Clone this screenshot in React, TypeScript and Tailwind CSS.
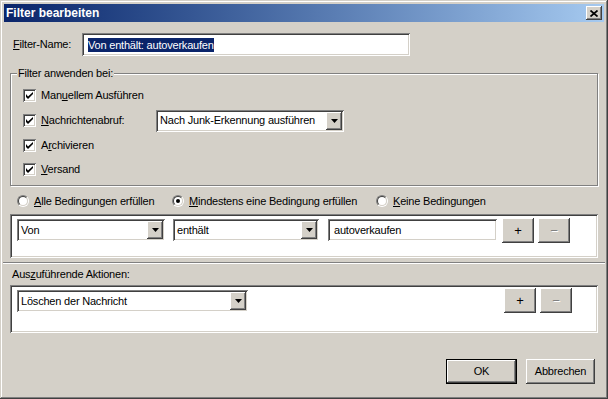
const raised =
  'shadow-[inset_-1px_-1px_#404040,inset_1px_1px_#ffffff,inset_-2px_-2px_#808080,inset_2px_2px_#d4d0c8]'
const sunken =
  'shadow-[inset_1px_1px_#808080,inset_-1px_-1px_#ffffff,inset_2px_2px_#404040,inset_-2px_-2px_#d4d0c8]'

function Arrow() {
  return (
    <span className={`w-[16px] self-stretch my-[2px] mr-[2px] bg-[#d4d0c8] flex items-center justify-center ${raised}`}>
      <svg width="7" height="4" viewBox="0 0 7 4">
        <path d="M0 0h7L3.5 4z" fill="#000" />
      </svg>
    </span>
  )
}

function Select({ value, className }: { value: string; className: string }) {
  return (
    <div className={`h-[22px] bg-white flex items-stretch ${sunken} ${className}`}>
      <span className="flex-1 flex items-center pl-[4px] whitespace-nowrap overflow-hidden">{value}</span>
      <Arrow />
    </div>
  )
}

function Check({ children, h }: { children: React.ReactNode; h: string }) {
  return (
    <div className={`flex items-center ${h}`}>
      <span className={`w-[13px] h-[13px] bg-white flex items-center justify-center ${sunken}`}>
        <svg width="7" height="7" viewBox="0 0 7 7">
          <path d="M0 2v3l2 2 5-5V-0L2 4.5z" fill="#000" />
        </svg>
      </span>
      <span className="ml-[5px]">{children}</span>
    </div>
  )
}

function Radio({ on, children, w }: { on?: boolean; children: React.ReactNode; w: string }) {
  return (
    <div className={`flex items-center ${w}`}>
      <span className="w-[12px] h-[12px] rounded-full border border-t-[#808080] border-l-[#808080] border-b-white border-r-white">
        <span className="w-full h-full rounded-full border border-t-[#404040] border-l-[#404040] border-b-[#d4d0c8] border-r-[#d4d0c8] bg-white flex items-center justify-center">
          {on && <span className="w-[4px] h-[4px] rounded-full bg-black" />}
        </span>
      </span>
      <span className="ml-[5px] whitespace-nowrap">{children}</span>
    </div>
  )
}

function PlusMinus() {
  return (
    <div className="flex gap-[4px]">
      <button className={`w-[32px] h-[25px] bg-[#d4d0c8] text-[13px] flex items-center justify-center ${raised}`}>+</button>
      <button className={`w-[32px] h-[25px] bg-[#d4d0c8] text-[13px] text-[#808080] [text-shadow:1px_1px_#ffffff] flex items-center justify-center ${raised}`}>−</button>
    </div>
  )
}

export default function App() {
  return (
    <div className="w-[608px] h-[399px] overflow-hidden bg-[#d4d0c8] p-[4px] font-['Liberation_Sans',Arial,sans-serif] text-[11px] tracking-[-0.2px] text-black shadow-[inset_-1px_-1px_#404040,inset_1px_1px_#d4d0c8,inset_-2px_-2px_#808080,inset_2px_2px_#ffffff]">
      {/* Title bar */}
      <div className="h-[18px] flex items-center justify-between pl-[2px] pr-[2px] bg-linear-to-r from-[#0a246a] to-[#a6caf0]">
        <span className="text-white font-bold text-[12px] tracking-normal">Filter bearbeiten</span>
        <button className={`w-[16px] h-[14px] bg-[#d4d0c8] flex items-center justify-center ${raised}`}>
          <svg width="8" height="7" viewBox="0 0 8 7">
            <path d="M0.5 0.5L7.5 6.5M7.5 0.5L0.5 6.5" stroke="#000" strokeWidth="1.7" />
          </svg>
        </button>
      </div>

      <div className="px-[6px]">
        {/* Filter name */}
        <div className="mt-[11px] h-[23px] flex items-center">
          <span className="w-[72px] pl-[3px]">
            <span className="underline">F</span>ilter-Name:
          </span>
          <div className={`w-[328px] h-[23px] bg-white flex items-center pl-[6px] ${sunken}`}>
            <span className="bg-[#0a246a] text-white leading-[14px]">Von enthält: autoverkaufen</span>
          </div>
        </div>

        {/* Group box */}
        <div className="relative mt-[17px] h-[113px] border border-[#808080] shadow-[inset_1px_1px_#ffffff,1px_1px_#ffffff] pl-[12px] pt-[9px]">
          <span className="absolute -top-[7px] left-[6px] px-[1px] bg-[#d4d0c8] leading-[13px]">Filter anwenden bei:</span>
          <Check h="h-[25px]">
            Man<span className="underline">u</span>ellem Ausführen
          </Check>
          <div className="flex items-center h-[25px]">
            <Check h="h-[25px] w-[133px]">
              <span className="underline">N</span>achrichtenabruf:
            </Check>
            <Select value="Nach Junk-Erkennung ausführen" className="w-[188px]" />
          </div>
          <Check h="h-[24px]">
            A<span className="underline">r</span>chivieren
          </Check>
          <Check h="h-[24px]">
            <span className="underline">V</span>ersand
          </Check>
        </div>

        {/* Radios */}
        <div className="mt-[5px] h-[20px] flex items-center pl-[7px]">
          <Radio w="w-[155px]">
            <span className="underline">A</span>lle Bedingungen erfüllen
          </Radio>
          <Radio on w="w-[204px]">
            <span className="underline">M</span>indestens eine Bedingung erfüllen
          </Radio>
          <Radio w="w-[150px]">
            <span className="underline">K</span>eine Bedingungen
          </Radio>
        </div>

        {/* Conditions */}
        <div className={`mt-[3px] h-[44px] bg-white flex items-start pl-[7px] pt-[4px] ${sunken}`}>
          <Select value="Von" className="w-[148px] mt-[1px]" />
          <Select value="enthält" className="w-[146px] ml-[8px] mt-[1px]" />
          <div className={`w-[169px] h-[22px] ml-[9px] mt-[1px] bg-white flex items-center pl-[6px] ${sunken}`}>
            autoverkaufen
          </div>
          <div className="ml-[5px]">
            <PlusMinus />
          </div>
        </div>

        {/* Separator */}
        <div className="-mx-[7px] mt-[4px] h-[2px] border-t border-t-[#808080] border-b border-b-white" />

        <div className="mt-[2px] h-[16px] flex items-center pl-[2px]">
          Aus<span className="underline">z</span>uführende Aktionen:
        </div>

        {/* Actions */}
        <div className={`mt-[3px] h-[48px] bg-white flex items-start pl-[7px] pt-[3px] pr-[26px] ${sunken}`}>
          <Select value="Löschen der Nachricht" className="w-[231px] mt-[2px]" />
          <div className="ml-auto">
            <PlusMinus />
          </div>
        </div>

        {/* Dialog buttons */}
        <div className="mt-[26px] flex justify-end gap-[9px] pr-[3px]">
          <button className={`w-[71px] h-[25px] bg-[#d4d0c8] border border-black shadow-[inset_-1px_-1px_#404040,inset_1px_1px_#ffffff,inset_-2px_-2px_#808080]`}>
            OK
          </button>
          <button className={`w-[69px] h-[25px] bg-[#d4d0c8] ${raised}`}>Abbrechen</button>
        </div>
      </div>
    </div>
  )
}
